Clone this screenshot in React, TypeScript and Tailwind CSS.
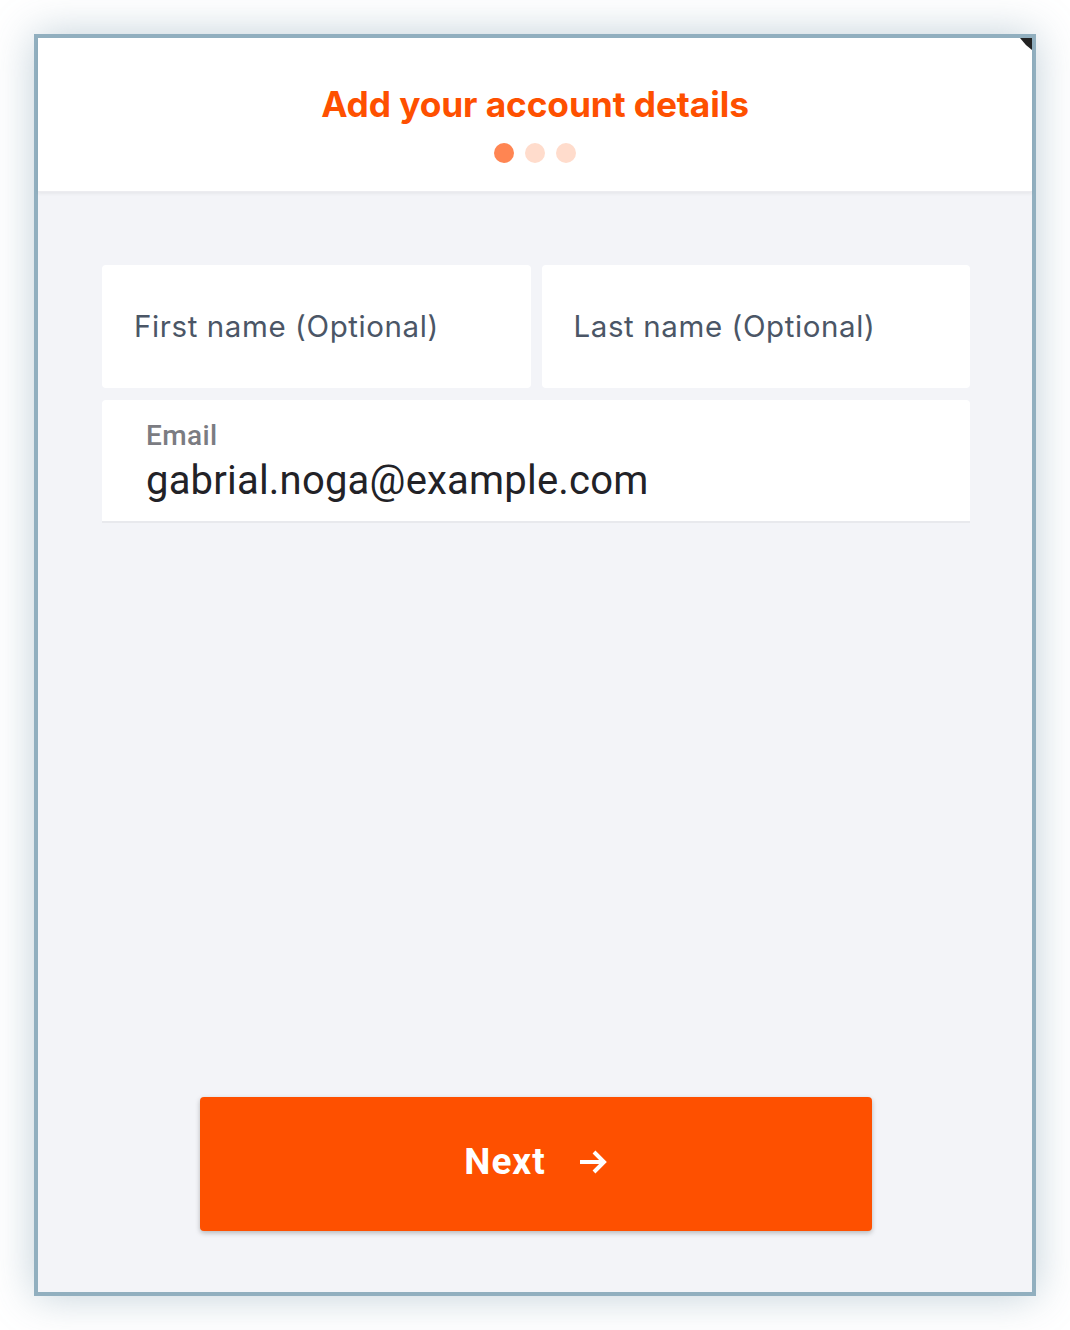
import React from "react";

export default function App() {
  return (
    <div className="w-[1070px] h-[1330px] bg-white p-[34px]" style={{ fontFamily: "Inter, 'Noto Sans', sans-serif" }}>
      <div className="relative w-[1002px] h-[1262px] border-4 border-[#91afbf] bg-[#f3f4f8] flex flex-col shadow-[0_0_40px_rgba(120,150,170,0.45)]">
        <svg className="absolute right-0 top-0 z-10" width="12" height="12" viewBox="0 0 12 12">
          <path d="M0 0 H12 V12 Q5 7 0 0 Z" fill="#222" />
        </svg>
        <div className="bg-white h-[154px] flex flex-col items-center shadow-[0_2px_3px_rgba(0,0,0,0.05)] border-b border-[#ececf0]">
          <div className="mt-[45px] text-[35.3px] leading-[44px] font-bold text-[#fe5000] tracking-[-0.1px]">Add your account details</div>
          <div className="flex gap-[11px] mt-[16px]">
            <div className="w-[20px] h-[20px] rounded-full bg-[#ff8552]" />
            <div className="w-[20px] h-[20px] rounded-full bg-[#ffdccc]" />
            <div className="w-[20px] h-[20px] rounded-full bg-[#ffdccc]" />
          </div>
        </div>
        <div className="flex-1 flex flex-col pl-[64px] pr-[62px] pt-[73px]">
          <div className="flex gap-[11px]">
            <div className="flex-1 h-[123px] bg-white rounded-[4px] flex items-center pl-[32px]">
              <span className="text-[29.5px] text-[#4b5666] tracking-[0.6px]">First name (Optional)</span>
            </div>
            <div className="flex-1 h-[123px] bg-white rounded-[4px] flex items-center pl-[32px]">
              <span className="text-[29.5px] text-[#4b5666] tracking-[0.6px]">Last name (Optional)</span>
            </div>
          </div>
          <div className="mt-[12px] h-[123px] bg-white rounded-t-[4px] border-b-2 border-[#e8e9ed] pl-[44px] pt-[19px]" style={{ fontFamily: "Roboto, sans-serif" }}>
            <div className="text-[28px] leading-[34px] font-medium text-[#7b7c82] tracking-[0.4px]">Email</div>
            <div className="text-[40px] leading-[48px] text-[#222227] mt-[4px] tracking-[0.2px]">gabrial.noga@example.com</div>
          </div>
          <div className="mt-auto mb-[61px] ml-[98px] mr-[98px] h-[134px] pb-[4px] bg-[#fe5000] rounded-[4px] shadow-[0_2px_5px_rgba(0,0,0,0.25)] flex items-center justify-center gap-[32px]" style={{ fontFamily: "Roboto, sans-serif" }}>
            <span className="text-[37px] font-bold text-white tracking-[1px]">Next</span>
            <svg width="30" height="26" viewBox="0 0 30 26" fill="none" stroke="white" strokeWidth="4">
              <path d="M2 13 H26" />
              <path d="M16 3 L26 13 L16 23" strokeLinejoin="miter" />
            </svg>
          </div>
        </div>
      </div>
    </div>
  );
}
